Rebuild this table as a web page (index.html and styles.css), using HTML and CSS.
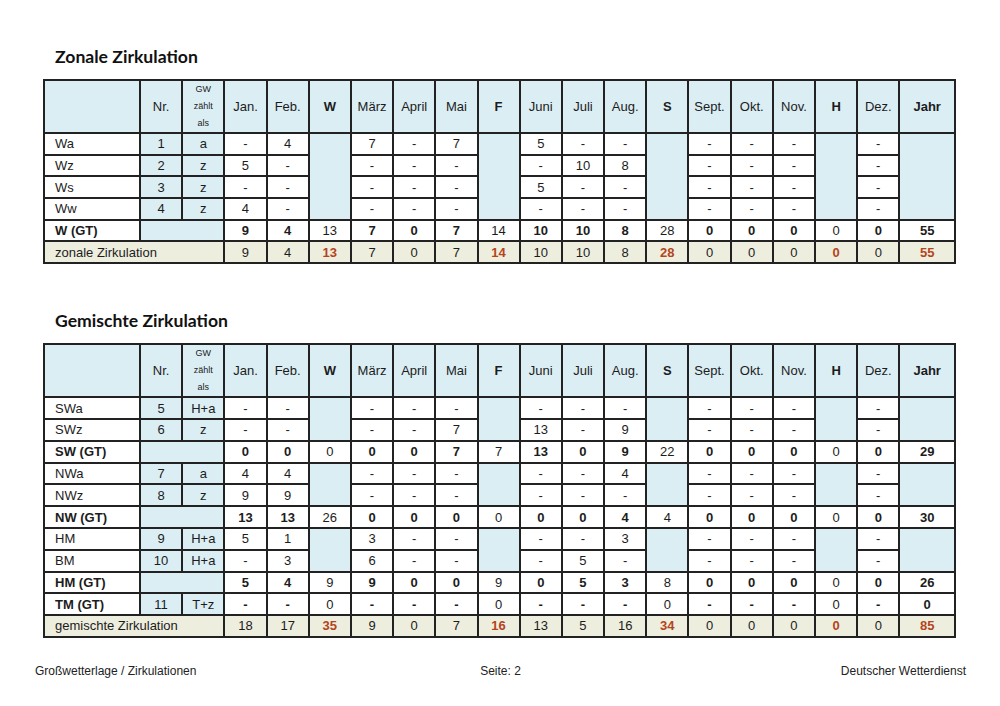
FILE: index.html
```html
<!DOCTYPE html>
<html lang="de">
<head>
<meta charset="utf-8">
<title>Zirkulationen</title>
<link rel="stylesheet" href="styles.css">
</head>
<body>
<div class="page">
  <h2 class="title first">Zonale Zirkulation</h2>
  <table class="grid">
    <colgroup>
      <col class="c-label">
      <col class="c-n"><col class="c-n"><col class="c-n"><col class="c-n"><col class="c-n"><col class="c-n">
      <col class="c-n"><col class="c-n"><col class="c-n"><col class="c-n"><col class="c-n"><col class="c-n">
      <col class="c-n"><col class="c-n"><col class="c-n"><col class="c-n"><col class="c-n"><col class="c-n">
      <col class="c-year">
    </colgroup>
    <thead>
      <tr class="head">
        <th class="b"></th><th class="b">Nr.</th><th class="b gw">GW<br>zählt<br>als</th>
        <th class="b">Jan.</th><th class="b">Feb.</th><th class="b strong">W</th>
        <th class="b">März</th><th class="b">April</th><th class="b">Mai</th><th class="b strong">F</th>
        <th class="b">Juni</th><th class="b">Juli</th><th class="b">Aug.</th><th class="b strong">S</th>
        <th class="b">Sept.</th><th class="b">Okt.</th><th class="b">Nov.</th><th class="b strong">H</th>
        <th class="b">Dez.</th><th class="b strong">Jahr</th>
      </tr>
    </thead>
    <tbody>
      <tr><td class="lbl">Wa</td><td class="b">1</td><td class="b">a</td><td>-</td><td>4</td><td class="b" rowspan="4"></td><td>7</td><td>-</td><td>7</td><td class="b" rowspan="4"></td><td>5</td><td>-</td><td>-</td><td class="b" rowspan="4"></td><td>-</td><td>-</td><td>-</td><td class="b" rowspan="4"></td><td>-</td><td class="b" rowspan="4"></td></tr>
      <tr><td class="lbl">Wz</td><td class="b">2</td><td class="b">z</td><td>5</td><td>-</td><td>-</td><td>-</td><td>-</td><td>-</td><td>10</td><td>8</td><td>-</td><td>-</td><td>-</td><td>-</td></tr>
      <tr><td class="lbl">Ws</td><td class="b">3</td><td class="b">z</td><td>-</td><td>-</td><td>-</td><td>-</td><td>-</td><td>5</td><td>-</td><td>-</td><td>-</td><td>-</td><td>-</td><td>-</td></tr>
      <tr><td class="lbl">Ww</td><td class="b">4</td><td class="b">z</td><td>4</td><td>-</td><td>-</td><td>-</td><td>-</td><td>-</td><td>-</td><td>-</td><td>-</td><td>-</td><td>-</td><td>-</td></tr>
      <tr class="gt"><td class="lbl">W (GT)</td><td class="b" colspan="2"></td><td>9</td><td>4</td><td class="n">13</td><td>7</td><td>0</td><td>7</td><td class="n">14</td><td>10</td><td>10</td><td>8</td><td class="n">28</td><td>0</td><td>0</td><td>0</td><td class="n">0</td><td>0</td><td>55</td></tr>
      <tr class="sum"><td class="lbl" colspan="3">zonale Zirkulation</td><td>9</td><td>4</td><td class="r">13</td><td>7</td><td>0</td><td>7</td><td class="r">14</td><td>10</td><td>10</td><td>8</td><td class="r">28</td><td>0</td><td>0</td><td>0</td><td class="r">0</td><td>0</td><td class="r">55</td></tr>
    </tbody>
  </table>

  <h2 class="title second">Gemischte Zirkulation</h2>
  <table class="grid two">
    <colgroup>
      <col class="c-label">
      <col class="c-n"><col class="c-n"><col class="c-n"><col class="c-n"><col class="c-n"><col class="c-n">
      <col class="c-n"><col class="c-n"><col class="c-n"><col class="c-n"><col class="c-n"><col class="c-n">
      <col class="c-n"><col class="c-n"><col class="c-n"><col class="c-n"><col class="c-n"><col class="c-n">
      <col class="c-year">
    </colgroup>
    <thead>
      <tr class="head">
        <th class="b"></th><th class="b">Nr.</th><th class="b gw">GW<br>zählt<br>als</th>
        <th class="b">Jan.</th><th class="b">Feb.</th><th class="b strong">W</th>
        <th class="b">März</th><th class="b">April</th><th class="b">Mai</th><th class="b strong">F</th>
        <th class="b">Juni</th><th class="b">Juli</th><th class="b">Aug.</th><th class="b strong">S</th>
        <th class="b">Sept.</th><th class="b">Okt.</th><th class="b">Nov.</th><th class="b strong">H</th>
        <th class="b">Dez.</th><th class="b strong">Jahr</th>
      </tr>
    </thead>
    <tbody>
      <tr><td class="lbl">SWa</td><td class="b">5</td><td class="b">H+a</td><td>-</td><td>-</td><td class="b" rowspan="2"></td><td>-</td><td>-</td><td>-</td><td class="b" rowspan="2"></td><td>-</td><td>-</td><td>-</td><td class="b" rowspan="2"></td><td>-</td><td>-</td><td>-</td><td class="b" rowspan="2"></td><td>-</td><td class="b" rowspan="2"></td></tr>
      <tr><td class="lbl">SWz</td><td class="b">6</td><td class="b">z</td><td>-</td><td>-</td><td>-</td><td>-</td><td>7</td><td>13</td><td>-</td><td>9</td><td>-</td><td>-</td><td>-</td><td>-</td></tr>
      <tr class="gt"><td class="lbl">SW (GT)</td><td class="b" colspan="2"></td><td>0</td><td>0</td><td class="n">0</td><td>0</td><td>0</td><td>7</td><td class="n">7</td><td>13</td><td>0</td><td>9</td><td class="n">22</td><td>0</td><td>0</td><td>0</td><td class="n">0</td><td>0</td><td>29</td></tr>

      <tr><td class="lbl">NWa</td><td class="b">7</td><td class="b">a</td><td>4</td><td>4</td><td class="b" rowspan="2"></td><td>-</td><td>-</td><td>-</td><td class="b" rowspan="2"></td><td>-</td><td>-</td><td>4</td><td class="b" rowspan="2"></td><td>-</td><td>-</td><td>-</td><td class="b" rowspan="2"></td><td>-</td><td class="b" rowspan="2"></td></tr>
      <tr><td class="lbl">NWz</td><td class="b">8</td><td class="b">z</td><td>9</td><td>9</td><td>-</td><td>-</td><td>-</td><td>-</td><td>-</td><td>-</td><td>-</td><td>-</td><td>-</td><td>-</td></tr>
      <tr class="gt"><td class="lbl">NW (GT)</td><td class="b" colspan="2"></td><td>13</td><td>13</td><td class="n">26</td><td>0</td><td>0</td><td>0</td><td class="n">0</td><td>0</td><td>0</td><td>4</td><td class="n">4</td><td>0</td><td>0</td><td>0</td><td class="n">0</td><td>0</td><td>30</td></tr>

      <tr><td class="lbl">HM</td><td class="b">9</td><td class="b">H+a</td><td>5</td><td>1</td><td class="b" rowspan="2"></td><td>3</td><td>-</td><td>-</td><td class="b" rowspan="2"></td><td>-</td><td>-</td><td>3</td><td class="b" rowspan="2"></td><td>-</td><td>-</td><td>-</td><td class="b" rowspan="2"></td><td>-</td><td class="b" rowspan="2"></td></tr>
      <tr><td class="lbl">BM</td><td class="b">10</td><td class="b">H+a</td><td>-</td><td>3</td><td>6</td><td>-</td><td>-</td><td>-</td><td>5</td><td>-</td><td>-</td><td>-</td><td>-</td><td>-</td></tr>
      <tr class="gt"><td class="lbl">HM (GT)</td><td class="b" colspan="2"></td><td>5</td><td>4</td><td class="n">9</td><td>9</td><td>0</td><td>0</td><td class="n">9</td><td>0</td><td>5</td><td>3</td><td class="n">8</td><td>0</td><td>0</td><td>0</td><td class="n">0</td><td>0</td><td>26</td></tr>

      <tr class="gt"><td class="lbl">TM (GT)</td><td class="b n">11</td><td class="b n">T+z</td><td>-</td><td>-</td><td class="n">0</td><td>-</td><td>-</td><td>-</td><td class="n">0</td><td>-</td><td>-</td><td>-</td><td class="n">0</td><td>-</td><td>-</td><td>-</td><td class="n">0</td><td>-</td><td>0</td></tr>
      <tr class="sum"><td class="lbl" colspan="3">gemischte Zirkulation</td><td>18</td><td>17</td><td class="r">35</td><td>9</td><td>0</td><td>7</td><td class="r">16</td><td>13</td><td>5</td><td>16</td><td class="r">34</td><td>0</td><td>0</td><td>0</td><td class="r">0</td><td>0</td><td class="r">85</td></tr>
    </tbody>
  </table>

  <footer class="foot">
    <span class="f-left">Großwetterlage / Zirkulationen</span>
    <span class="f-mid">Seite: 2</span>
    <span class="f-right">Deutscher Wetterdienst</span>
  </footer>
</div>
</body>
</html>
```

FILE: styles.css
```css
html, body {
  margin: 0;
  padding: 0;
  background: #ffffff;
}

body {
  font-family: "Liberation Sans", Arial, sans-serif;
  color: #1c1c1c;
  width: 1000px;
  height: 706px;
  overflow: hidden;
}

.page {
  padding-left: 43px;
}

.title {
  font-family: Lato, "Open Sans", sans-serif;
  font-weight: 700;
  font-size: 17.6px;
  line-height: 20px;
  height: 20px;
  margin: 0 0 12px 12px;
  color: #111;
}

.title.first {
  padding-top: 47px;
}

.title.second {
  margin-top: 47px;
}

.grid {
  border-collapse: collapse;
  table-layout: fixed;
  width: 913px;
  border: 2px solid #1e1e1e;
  font-size: 13px;
}

.c-label { width: 96px; }
.c-n { width: 42.2px; }
.c-year { width: auto; }

.grid th,
.grid td {
  border: 2px solid #222;
  padding: 0;
  text-align: center;
  vertical-align: middle;
  font-weight: 400;
  line-height: 15px;
  white-space: nowrap;
  overflow: hidden;
}

.grid td {
  height: 19.7px;
}

.grid.two td {
  height: 19.8px;
}

.grid .head th {
  height: 49px;
}

.grid th.gw {
  font-size: 9px;
  line-height: 17px;
}

.grid .b {
  background: #dbeef4;
}

.grid .strong {
  font-weight: 700;
}

.grid td.lbl {
  text-align: left;
  padding-left: 10px;
}

.grid .gt td {
  font-weight: 700;
}

.grid .gt td.n {
  font-weight: 400;
}

.grid .sum td {
  background: #eeeedf;
}

.grid .sum td.r {
  color: #b4441b;
  font-weight: 700;
}

.foot {
  display: grid;
  grid-template-columns: 1fr auto 1fr;
  margin: 26px 0 0 -8px;
  width: 931px;
  font-size: 12px;
  line-height: 14px;
  color: #222;
}

.f-left { justify-self: start; }
.f-mid { justify-self: center; }
.f-right { justify-self: end; }
```
